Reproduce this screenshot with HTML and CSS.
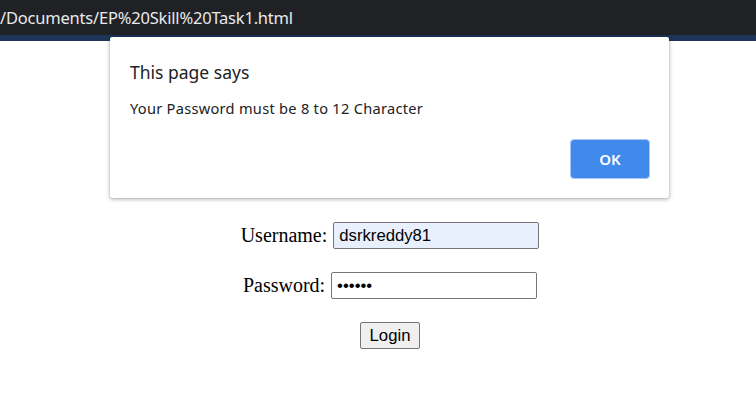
FILE: index.html
```html
<!DOCTYPE html>
<html>
<head>
<meta charset="utf-8">
<link rel="stylesheet" href="styles.css">
</head>
<body>
<div class="chrome"><span class="url">/Documents/EP%20Skill%20Task1.html</span></div>
<div class="accent"></div>
<main class="page">
  <form class="login">
    <div class="row"><label class="label">Username:</label><input class="field filled" type="text" value="dsrkreddy81"></div>
    <div class="row"><label class="label">Password:</label><input class="field" type="password" value="123456"></div>
    <div class="row"><button class="btn" type="button">Login</button></div>
  </form>
</main>
<div class="dialog">
  <div class="title">This page says</div>
  <div class="msg">Your Password must be 8 to 12 Character</div>
  <div class="actions"><button class="ok" type="button">OK</button></div>
</div>
</body>
</html>
```
FILE: styles.css
```css
html, body { margin: 0; padding: 0; background: #fff; }
body { width: 756px; height: 402px; overflow: hidden; position: relative; font-family: "Liberation Serif", serif; }
.chrome { height: 35px; background: #202124; display: flex; align-items: center; overflow: hidden; }
.url { font-family: "Noto Sans", "Open Sans", sans-serif; font-size: 16.5px; color: #e8eaed; margin-left: 0; white-space: nowrap; letter-spacing: -0.2px; }
.accent { height: 6px; background: #1c3559; }
.page { padding: 181px 0 0 24px; }
.login { display: flex; flex-direction: column; align-items: center; gap: 23px; }
.row { display: flex; align-items: center; height: 27px; }
.label { font-size: 20px; color: #000; margin-right: 6px; }
.field { width: 206px; height: 27px; box-sizing: border-box; border: 1px solid #767676; border-radius: 2px; padding: 0 5px; font-family: "Liberation Sans", Arial, sans-serif; font-size: 16.7px; color: #000; background: #fff; margin: 0; outline: none; }
.field.filled { background: #e8f0fe; }
.btn { width: 60px; height: 27px; margin: 0; padding: 0; border: 1px solid #767676; border-radius: 2px; background: #efefef; font-family: "Liberation Sans", Arial, sans-serif; font-size: 16.7px; color: #000; }
.dialog { position: absolute; top: 37px; left: 110px; width: 559px; height: 161px; box-sizing: border-box; background: #fff; border-radius: 2px; box-shadow: 0 1px 4px rgba(0,0,0,0.35), 0 0 1px rgba(0,0,0,0.3); padding: 23px 19px 19px 20px; display: flex; flex-direction: column; font-family: "Noto Sans", "Open Sans", sans-serif; }
.title { font-size: 17.5px; color: #202124; line-height: 24px; }
.msg { font-size: 14.6px; color: #202124; margin-top: 14px; line-height: 20px; letter-spacing: 0.28px; }
.actions { margin-top: auto; display: flex; justify-content: flex-end; }
.ok { width: 80px; height: 40px; border: 1px solid #a9c8f5; border-radius: 4px; background: #4289ec; color: #fff; font-family: "Noto Sans", "Open Sans", sans-serif; font-weight: 600; font-size: 15px; padding: 0; }
```
